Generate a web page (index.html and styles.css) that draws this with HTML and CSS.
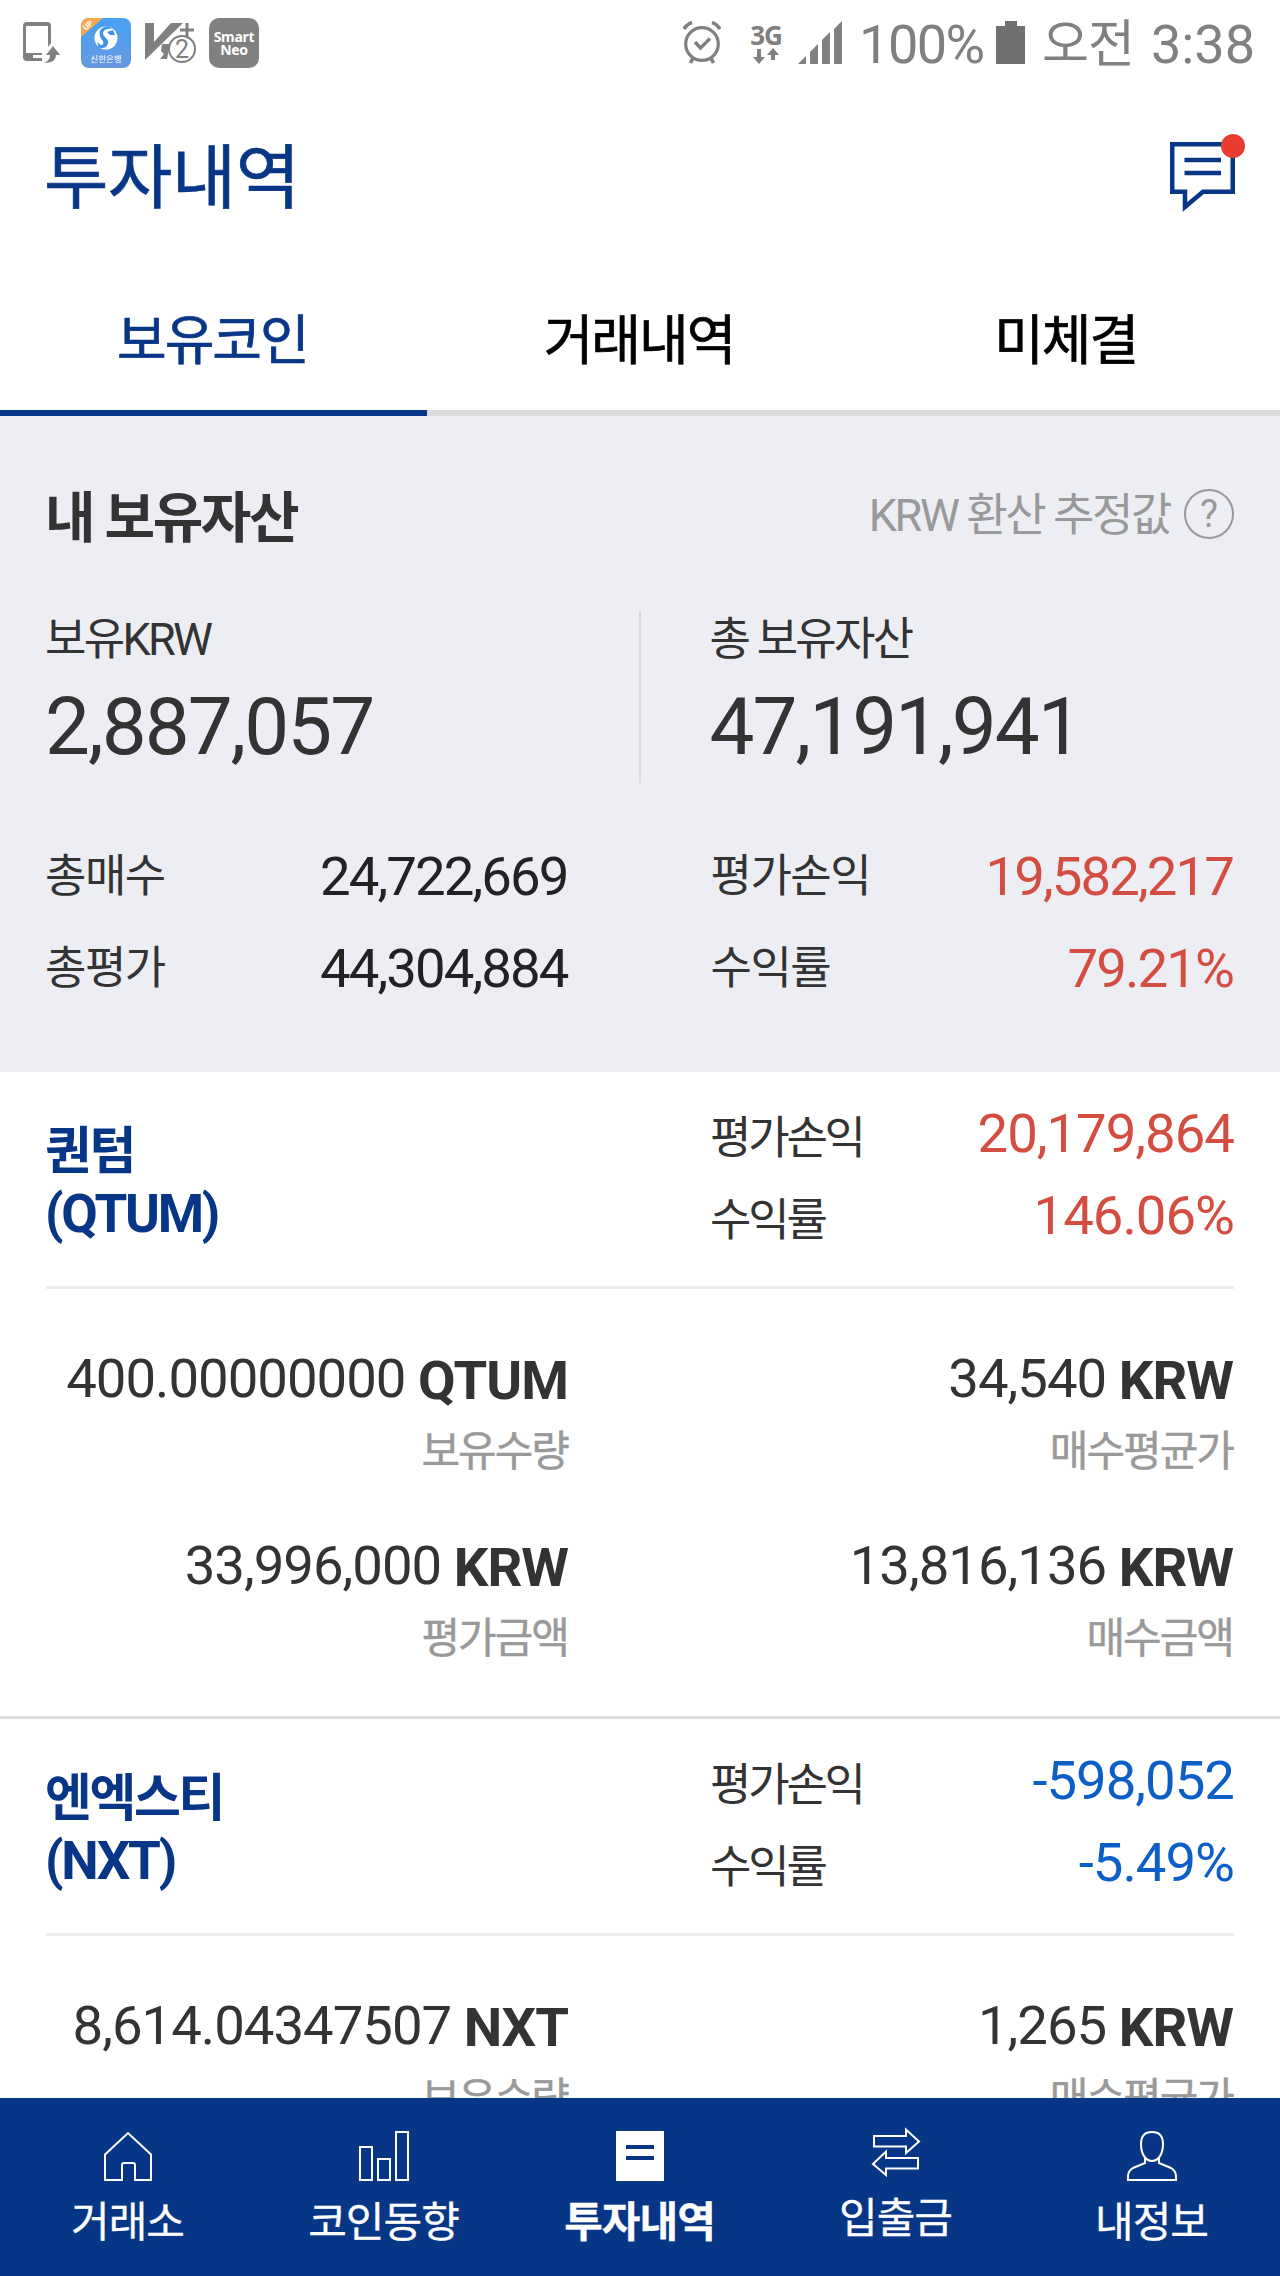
FILE: index.html
```html
<!DOCTYPE html>
<html lang="ko">
<head>
    <meta charset="UTF-8">
    <meta name="viewport" content="width=device-width, initial-scale=1.0">
    <title>투자내역</title>
    <link rel="stylesheet" href="styles.css">
</head>
<body>
    <div class="status-bar">
        <svg class="st-phone" width="38" height="42" viewBox="0 0 38 42">
            <path d="M4 0h20a4 4 0 0 1 4 4v17l-3 4V4H3v27h16l0 2h-9v3h9v3H4a4 4 0 0 1-4-4V4a4 4 0 0 1 4-4z" fill="#808080"/>
            <path d="M30 24l7 9h-4c0 5-4 8-12 8 4-2 6-4 6-8h-4z" fill="#808080"/>
        </svg>
        <div class="bank-icon">
            <svg width="50" height="50" viewBox="0 0 50 50">
                <path d="M0 0h22L0 19z" fill="#ffa64d"/>
                <circle cx="25" cy="20" r="11.5" fill="#fff"/>
                <path d="M31 11c-7-1-11 3-8 7 4 4 6 6 2 11-3 2-6 1-9-1 6 0 8-3 5-6-4-5-3-12 3-13 3-1 5 0 7 2z" fill="#3f93ea"/>
                <path d="M26 14l6-2 2 5-5 0zM16 24l5 4-3 2z" fill="#3f93ea"/>
            </svg>
            <span class="bank-up">UP</span>
            <span class="bank-name">신한은행</span>
        </div>
        <svg class="st-v3" width="51" height="42" viewBox="0 0 51 42">
            <path d="M0 1h9v19L26 1h12L0 38z" fill="#808080"/>
            <path d="M17 22h8l-3 15h-7l4-5-3-3z" fill="#808080"/>
            <path d="M42 1v16M35 8h14" stroke="#808080" stroke-width="3"/>
            <circle cx="37" cy="27" r="13" fill="#fff" stroke="#808080" stroke-width="2"/>
            <text x="37" y="36" text-anchor="middle" class="v3-num">2</text>
        </svg>
        <div class="neo-icon">Smart<br>Neo</div>

        <div class="status-right">
            <svg class="st-alarm" width="38" height="43" viewBox="0 0 38 43" fill="none" stroke="#808080">
                <circle cx="19" cy="23" r="16.3" stroke-width="3.2"/>
                <path d="M12 21l5.500 6 9.500-9.500" stroke-width="3.4"/>
                <path d="M1 8q3-5 8-6.500M37 8q-3-5-8-6.500M10 37l-2.500 5M28 37l2.500 5" stroke-width="3.6"/>
            </svg>
            <div class="network">
                <span>3G</span>
                <svg width="26" height="16" viewBox="0 0 26 16" fill="#808080">
                    <path d="M4 1h4v8h4l-6 7-6-7h4zM18 12h4V7h4l-6-7-6 7h4z"/>
                </svg>
            </div>
            <svg class="st-signal" width="44" height="43" viewBox="0 0 44 43" fill="#808080">
                <path d="M0 43l8-8v8zM12 31l8-8v20h-8zM24 19l8-8v32h-8zM36 8l8-8v43h-8z"/>
            </svg>
            <span class="battery-text">100%</span>
            <svg class="st-battery" width="29" height="43" viewBox="0 0 29 43">
                <path d="M0 5h9V0h12v5h8v38H0z" fill="#707070"/>
            </svg>
            <span class="ampm">오전</span>
            <span class="clock">3:38</span>
        </div>
    </div>

    <header class="header">
        <h1>투자내역</h1>
        <div class="message">
            <svg width="66" height="70" viewBox="0 0 66 70" fill="none" stroke="#083687" stroke-width="4.500">
                <path d="M2.250 2.250h60.500v47.500H33L15 65V49.750H2.250z"/>
                <path d="M14.500 18h36.500M14.500 31h36.500"/>
            </svg>
            <span class="dot"></span>
        </div>
    </header>

    <nav class="tabs">
        <a class="tab active">보유코인</a>
        <a class="tab">거래내역</a>
        <a class="tab">미체결</a>
    </nav>

    <main class="content">
        <section class="summary">
            <div class="summary-title">
                <h2>내 보유자산</h2>
                <div class="hint">KRW 환산 추정값 <span class="help">?</span></div>
            </div>
            <div class="totals">
                <div class="total">
                    <p class="total-label">보유KRW</p>
                    <p class="total-value">2,887,057</p>
                </div>
                <div class="total">
                    <p class="total-label">총 보유자산</p>
                    <p class="total-value">47,191,941</p>
                </div>
            </div>
            <div class="stats">
                <div class="stat"><span>총매수</span><b>24,722,669</b></div>
                <div class="stat"><span>평가손익</span><b class="up">19,582,217</b></div>
                <div class="stat"><span>총평가</span><b>44,304,884</b></div>
                <div class="stat"><span>수익률</span><b class="up">79.21%</b></div>
            </div>
        </section>

        <section class="coin">
            <div class="coin-head">
                <h3>퀀텀<br><span class="ticker">(QTUM)</span></h3>
                <div class="coin-profit">
                    <div class="profit"><span>평가손익</span><b class="up">20,179,864</b></div>
                    <div class="profit"><span>수익률</span><b class="up">146.06%</b></div>
                </div>
            </div>
            <div class="coin-body">
                <div class="cell"><p class="amount">400.00000000 <b>QTUM</b></p><p class="caption">보유수량</p></div>
                <div class="cell"><p class="amount">34,540 <b>KRW</b></p><p class="caption">매수평균가</p></div>
                <div class="cell"><p class="amount">33,996,000 <b>KRW</b></p><p class="caption">평가금액</p></div>
                <div class="cell"><p class="amount">13,816,136 <b>KRW</b></p><p class="caption">매수금액</p></div>
            </div>
        </section>

        <section class="coin">
            <div class="coin-head">
                <h3>엔엑스티<br><span class="ticker">(NXT)</span></h3>
                <div class="coin-profit">
                    <div class="profit"><span>평가손익</span><b class="down">-598,052</b></div>
                    <div class="profit"><span>수익률</span><b class="down">-5.49%</b></div>
                </div>
            </div>
            <div class="coin-body">
                <div class="cell"><p class="amount">8,614.04347507 <b>NXT</b></p><p class="caption">보유수량</p></div>
                <div class="cell"><p class="amount">1,265 <b>KRW</b></p><p class="caption">매수평균가</p></div>
            </div>
        </section>
    </main>

    <nav class="bottom-nav">
        <a class="nav-item">
            <svg width="50" height="50" viewBox="0 0 50 50" fill="none" stroke="#fff" stroke-width="2">
                <path d="M2 23.500L25 2l23 21.500V49H32V34q0-2-2-2H21q-2 0-2 2v15H2z"/>
            </svg>
            <span>거래소</span>
        </a>
        <a class="nav-item">
            <svg width="50" height="50" viewBox="0 0 50 50" fill="none" stroke="#fff" stroke-width="2">
                <path d="M1 16h12v33H1zM19 28h12v21H19zM37 1h12v48H37z"/>
            </svg>
            <span>코인동향</span>
        </a>
        <a class="nav-item active">
            <svg width="50" height="50" viewBox="0 0 50 50">
                <path d="M1 0h48v50H1z" fill="#fff"/>
                <path d="M11 16h28M11 27h28" stroke="#083687" stroke-width="4"/>
            </svg>
            <span>투자내역</span>
        </a>
        <a class="nav-item raised">
            <svg width="50" height="50" viewBox="0 0 50 50" fill="none" stroke="#fff" stroke-width="2">
                <path d="M3 9h32V2.500L48 14.500 35 26v-6.500H3zM47 31H15v-6.500L2 37l13 11v-6.500h32z"/>
            </svg>
            <span>입출금</span>
        </a>
        <a class="nav-item">
            <svg width="50" height="50" viewBox="0 0 50 50" fill="none" stroke="#fff" stroke-width="2">
                <path d="M25 1c-8 0-11 4-11 12 0 9 4 17 11 17s11-8 11-17c0-8-3-12-11-12z"/>
                <path d="M18 27v5l-12 5q-5 3-5 8v4h48v-4q0-5-5-8l-12-5v-5"/>
            </svg>
            <span>내정보</span>
        </a>
    </nav>
</body>
</html>
```
FILE: styles.css
```css
* {
    box-sizing: border-box;
    margin: 0;
    padding: 0;
}
body {
    display: flex;
    flex-direction: column;
    width: 1280px;
    height: 2276px;
    overflow: hidden;
    background: #fff;
    color: #333;
    font-family: Roboto, "Noto Sans CJK KR", sans-serif;
}

/* status bar */
.status-bar {
    display: flex;
    align-items: center;
    height: 85px;
    padding: 0 26px 0 23px;
    color: #808080;
}
.bank-icon {
    position: relative;
    width: 50px;
    height: 50px;
    margin-left: 20px;
    border-radius: 8px;
    overflow: hidden;
    background: linear-gradient(#47a1f5, #6699e0);
}
.bank-up {
    position: absolute;
    left: 2px;
    top: 3px;
    font-size: 8px;
    font-weight: bold;
    line-height: 9px;
    color: #fff;
    transform: rotate(-42deg);
}
.bank-name {
    position: absolute;
    left: 0;
    right: 0;
    bottom: 4px;
    font-size: 8.5px;
    line-height: 9px;
    text-align: center;
    color: #fff;
}
.st-v3 {
    margin-left: 14px;
}
.v3-num {
    font-size: 25px;
    fill: #808080;
}
.neo-icon {
    width: 50px;
    height: 50px;
    margin-left: 13px;
    padding-top: 12px;
    border-radius: 10px;
    background: #808080;
    color: #fff;
    font-family: "Noto Sans", sans-serif;
    font-size: 14px;
    font-weight: bold;
    letter-spacing: -0.3px;
    line-height: 13px;
    text-align: center;
}
.status-right {
    display: flex;
    align-items: center;
    margin-left: auto;
}
.network {
    width: 34px;
    height: 42px;
    margin: 2px 15px 0 28px;
    font-family: "Noto Sans", sans-serif;
    font-size: 26px;
    font-weight: bold;
    letter-spacing: -1px;
    text-align: center;
}
.network span {
    display: block;
    line-height: 24px;
}
.network svg {
    display: block;
    margin: 1px auto 0;
}
.battery-text {
    width: 128px;
    margin: 5px 0 0 17px;
    font-size: 54px;
    font-weight: 400;
    letter-spacing: -1.500px;
    line-height: 60px;
}
.st-battery {
    margin-left: 9px;
}
.ampm {
    margin: 5px 0 0 17px;
    font-size: 51px;
    letter-spacing: -1px;
    line-height: 60px;
}
.clock {
    margin: 5px -1px 0 17px;
    font-size: 54px;
    font-weight: 400;
    line-height: 60px;
}

/* header */
.header {
    display: flex;
    justify-content: space-between;
    align-items: center;
    height: 187px;
    padding: 0 44px 0 44px;
}
.header h1 {
    font-size: 70px;
    font-weight: 400;
    letter-spacing: -0.5px;
    line-height: 80px;
    color: #083687;
    -webkit-text-stroke: 0.7px #083687;
}
.message {
    position: relative;
    width: 66px;
    height: 70px;
    margin-top: -3px;
}
.message .dot {
    position: absolute;
    right: -9px;
    top: -8px;
    width: 24px;
    height: 24px;
    border-radius: 50%;
    background: #e83d30;
}

.tabs {
    display: flex;
    height: 144px;
}
.tab {
    flex: 1;
    padding: 1px 2px 0 0;
    border-bottom: 6px solid #dcdcdc;
    font-size: 54px;
    font-weight: 400;
    letter-spacing: -2px;
    line-height: 138px;
    text-align: center;
    color: #000;
    -webkit-text-stroke: 0.7px currentColor;
}
.tab.active {
    color: #083687;
    border-color: #083687;
}

.content {
    flex: 1;
    overflow: hidden;
}

/* summary */
.summary {
    height: 656px;
    padding: 72px 46px 0 45px;
    background: #edeef4;
}
.summary-title {
    display: flex;
    justify-content: space-between;
    height: 60px;
}
.summary-title h2 {
    font-size: 55px;
    font-weight: 700;
    letter-spacing: -2.400px;
    line-height: 61px;
}
.hint {
    display: flex;
    font-size: 45px;
    letter-spacing: -2.400px;
    line-height: 56px;
    color: #999;
}
.help {
    width: 50px;
    height: 50px;
    margin: 1px 0 0 14px;
    border: 2px solid #999;
    border-radius: 50%;
    font-size: 38px;
    letter-spacing: 0;
    line-height: 47px;
    text-align: center;
}
.totals {
    display: grid;
    grid-template-columns: 1fr 1fr;
    height: 172px;
    margin-top: 63px;
}
.total + .total {
    padding-left: 69px;
    border-left: 2px solid #d9dadf;
    margin-left: -1px;
}
.total-label {
    font-size: 45px;
    letter-spacing: -2.700px;
    line-height: 57px;
}
.total-value {
    margin-top: 13px;
    font-size: 80px;
    letter-spacing: -2px;
    line-height: 92px;
}
.stats {
    display: grid;
    grid-template-columns: 1fr 1fr;
    column-gap: 142px;
    margin-top: 48px;
}
.stat {
    display: flex;
    justify-content: space-between;
    font-size: 45px;
    letter-spacing: -1.500px;
    line-height: 92px;
}
.stat b {
    margin-right: 1px;
    font-size: 54.500px;
    font-weight: 400;
    letter-spacing: -1.900px;
    line-height: 90px;
    color: #222;
}
.stat .up, .profit .up {
    color: #d34d41;
}
.profit .down {
    color: #0d5fc8;
}

/* coin list */
.coin {
    height: 647px;
    border-bottom: 3px solid #dcdcdc;
}
.coin-head {
    display: grid;
    grid-template-columns: 1fr 1fr;
    column-gap: 142px;
    height: 217px;
    margin: 0 46px;
    border-bottom: 3px solid #ececec;
}
.coin-head h3 {
    margin-left: -1px;
    padding-top: 49px;
    font-size: 51px;
    font-weight: 700;
    letter-spacing: -2.400px;
    line-height: 62px;
    color: #083687;
}
.ticker {
    font-size: 53px;
    letter-spacing: -2.300px;
}
.coin-profit {
    margin-left: -1px;
    padding-top: 20px;
}
.profit {
    display: flex;
    justify-content: space-between;
    height: 82px;
    font-size: 45px;
    letter-spacing: -3.200px;
    line-height: 93px;
}
.profit b {
    font-size: 54.500px;
    font-weight: 400;
    letter-spacing: -1px;
    line-height: 82px;
}
.coin-body {
    display: grid;
    grid-template-columns: 1fr 1fr;
    column-gap: 142px;
    row-gap: 48px;
    padding: 54px 47px 0 45px;
    text-align: right;
}
.cell {
    height: 139px;
}
.amount {
    font-size: 54.500px;
    letter-spacing: -1px;
    line-height: 71px;
    white-space: nowrap;
}
.amount b {
    position: relative;
    top: 2px;
    font-weight: 700;
}
.caption {
    margin-top: 8px;
    font-size: 42px;
    letter-spacing: -2px;
    line-height: 59px;
    color: #999;
    -webkit-text-stroke: 0.4px #999;
}

/* bottom navigation */
.bottom-nav {
    display: flex;
    height: 178px;
    background: #083687;
}
.nav-item {
    display: flex;
    flex-direction: column;
    align-items: center;
    flex: 1;
    padding-top: 33px;
    font-size: 42px;
    letter-spacing: -1px;
    color: #fff;
}
.nav-item span {
    margin: 14px 0 0 -1px;
    line-height: 56px;
    -webkit-text-stroke: 0.3px #fff;
}
.nav-item.active {
    font-weight: 700;
}
.nav-item.raised {
    padding-top: 29px;
}
```
